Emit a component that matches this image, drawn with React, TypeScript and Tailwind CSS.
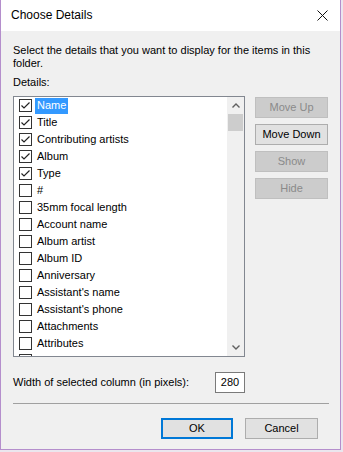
import React from "react";

const details = [
    { name: "Name", on: true, selected: true },
    { name: "Title", on: true },
    { name: "Contributing artists", on: true },
    { name: "Album", on: true },
    { name: "Type", on: true },
    { name: "#", on: false },
    { name: "35mm focal length", on: false },
    { name: "Account name", on: false },
    { name: "Album artist", on: false },
    { name: "Album ID", on: false },
    { name: "Anniversary", on: false },
    { name: "Assistant's name", on: false },
    { name: "Assistant's phone", on: false },
    { name: "Attachments", on: false },
    { name: "Attributes", on: false },
    { name: "", on: false },
];

const CheckBox = ({ on }: { on: boolean }) => (
    <div className="w-[13px] h-[13px] shrink-0 border border-[#333333] bg-white flex items-center justify-center">
        {on && (
            <svg width="11" height="11" viewBox="0 0 11 11">
                <path d="M1.5 5.5 L4 8 L9.5 2.5" fill="none" stroke="#222" strokeWidth="1.2" />
            </svg>
        )}
    </div>
);

const SideButton = ({ label, enabled }: { label: string; enabled?: boolean }) => (
    <div
        className={
            enabled
                ? "h-[21px] w-[73px] flex items-center justify-center border border-[#adadad] bg-[#e1e1e1] text-black"
                : "h-[21px] w-[73px] flex items-center justify-center border border-[#bfbfbf] bg-[#cccccc] text-[#8a8a8a]"
        }
    >
        {label}
    </div>
);

const App = () => {
    return (
        <div
            className="w-[343px] h-[452px] bg-[#ebe6ee] text-[11px] text-black leading-[13px] whitespace-nowrap"
            style={{ fontFamily: '"Liberation Sans", Arial, sans-serif' }}
        >
            <div className="w-[341px] h-[450px] border-x border-b border-[#b48ecc] flex flex-col">
                {/* title bar */}
                <div className="h-[31px] shrink-0 bg-white flex items-center justify-between pl-[10px] pr-[10px]">
                    <span className="text-[12px]">Choose Details</span>
                    <svg width="11" height="11" viewBox="0 0 11 11" className="mr-[2px]">
                        <path d="M0.5 0.5 L10.5 10.5 M10.5 0.5 L0.5 10.5" stroke="#111" strokeWidth="1" />
                    </svg>
                </div>

                {/* body */}
                <div className="flex-1 bg-[#f0f0f0] px-[12px] flex flex-col">
                    <p className="pt-[13px]">
                        Select the details that you want to display for the items in this
                        <br />
                        folder.
                    </p>
                    <p className="mt-[6px]">Details:</p>

                    <div className="mt-[7px] flex">
                        <div className="w-[234px] h-[261px] border border-[#828790] bg-white flex">
                            <div className="flex-1 overflow-hidden">
                                {details.map((d, i) => (
                                    <div key={i} className="h-[17px] flex items-center pl-[5px]">
                                        <CheckBox on={d.on} />
                                        {d.name && (
                                            <span
                                                className={
                                                    d.selected
                                                        ? "ml-[3px] px-[2px] h-[16px] flex items-center bg-[#3399ff] text-white"
                                                        : "ml-[3px] px-[2px]"
                                                }
                                            >
                                                {d.name}
                                            </span>
                                        )}
                                    </div>
                                ))}
                            </div>
                            <div className="w-[17px] bg-[#f0f0f0] flex flex-col">
                                <div className="h-[17px] flex items-center justify-center">
                                    <svg width="8" height="5" viewBox="0 0 8 5">
                                        <path d="M0.5 4.5 L4 1 L7.5 4.5" fill="none" stroke="#606060" strokeWidth="1.4" />
                                    </svg>
                                </div>
                                <div className="h-[17px] mx-[1px] bg-[#cdcdcd]" />
                                <div className="flex-1" />
                                <div className="h-[17px] flex items-center justify-center">
                                    <svg width="8" height="5" viewBox="0 0 8 5">
                                        <path d="M0.5 0.5 L4 4 L7.5 0.5" fill="none" stroke="#606060" strokeWidth="1.4" />
                                    </svg>
                                </div>
                            </div>
                        </div>

                        <div className="ml-[10px] flex flex-col gap-[6px] pt-[1px]">
                            <SideButton label="Move Up" />
                            <SideButton label="Move Down" enabled />
                            <SideButton label="Show" />
                            <SideButton label="Hide" />
                        </div>
                    </div>

                    <div className="mt-[15px] flex items-center">
                        <span className="w-[202px]">Width of selected column (in pixels):</span>
                        <div className="w-[30px] h-[21px] border border-[#7a7a7a] bg-white flex items-center justify-center">
                            280
                        </div>
                    </div>

                    <div className="mt-[10px] h-px bg-[#a0a0a0] w-[316px]" />

                    <div className="mt-[14px] flex justify-end gap-[12px] pr-[10px]">
                        <div className="w-[72px] h-[21px] border-2 border-[#0078d7] bg-[#e1e1e1] flex items-center justify-center">
                            OK
                        </div>
                        <div className="w-[73px] h-[21px] border border-[#adadad] bg-[#e1e1e1] flex items-center justify-center">
                            Cancel
                        </div>
                    </div>
                </div>
            </div>
        </div>
    );
};

export default App;
